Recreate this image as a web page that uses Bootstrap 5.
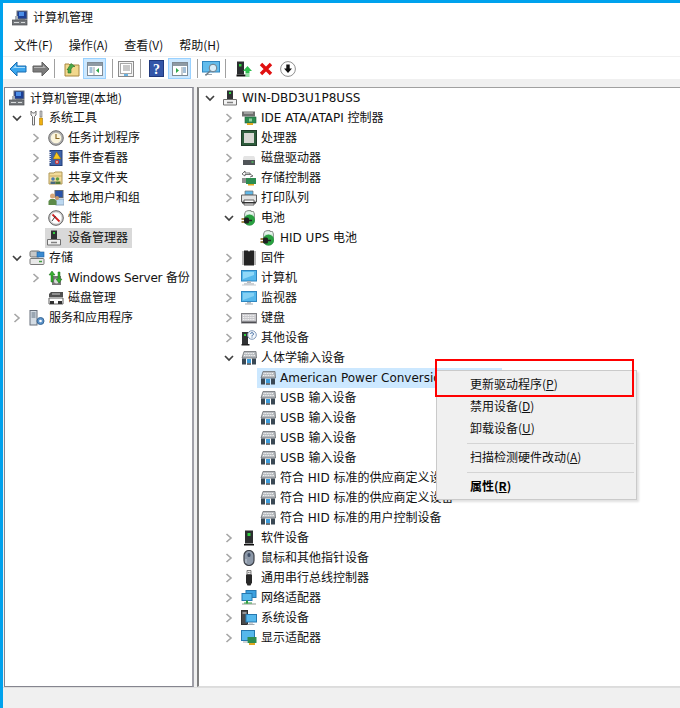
<!DOCTYPE html>
<html lang="zh-CN">
<head>
<meta charset="utf-8">
<title>计算机管理</title>
<link href="https://cdn.jsdelivr.net/npm/bootstrap@5.3.0/dist/css/bootstrap.min.css" rel="stylesheet">
<style>
html,body{margin:0;height:100%;overflow:hidden}
body{font:12px/20px "DejaVu Sans","Noto Sans CJK SC",sans-serif;color:#111;background:#fff}
.zh{font-family:"Noto Sans CJK SC","DejaVu Sans",sans-serif}
.mmc{width:680px;height:708px;border-top:3px solid #00a2ed;border-left:3px solid #00a2ed;background:#f0f0f0}
.mmc-title{height:30px;background:#fff;padding-left:9px;gap:5px}
.mmc-menu{height:24px;background:#fff;padding-left:11px;gap:16px;border-bottom:1px solid #f0f0f0}
.mmc-tools{height:22px;padding-top:1px;background:#fff;padding-left:3px}
.tb{width:23px;height:21px;flex:none}
.tb-on{background:#cce8ff;border:1px solid #99d1ff}
.tb-x{width:21px}
.tb-sep{width:1px;height:19px;background:#a0a0a0;flex:none}
.s1{margin:0 5px 0 2px}.s2{margin:0 1px 0 6px}.s3{margin:0 4px 0 3px}.s4{margin:0 6px 0 3px}
.mmc-main{height:600px;margin-top:8px;padding-left:1px;gap:3px}
.pane-l{width:190px;flex:none;background:#fff;border:1px solid #85858f;border-right-width:2px;border-right-color:#a0a0a8;padding-left:1px;overflow:hidden}
.pane-r{flex:1 1 0;min-width:0;background:#fff;border-left:2px solid #7f7f7f;border-top:1px solid #a0a0a0;border-bottom:1px solid #dcdcdc;overflow:hidden}
.rw{height:20px;white-space:nowrap}
.lv0{padding-left:3px}.lv1{padding-left:22px}.lv2{padding-left:41px}
.root-l{padding-left:3px}
.slot{width:16px;height:20px;flex:none;margin-right:4px}
.ico{width:16px;height:16px;flex:none;margin-right:4px}
.root-l .ico{margin-right:5px}
.pick{height:20px}
.pick-g{background:#d9d9d9;margin-left:-3px;padding:0 4px 0 1px}
.pick-g .ico{margin-right:6px}
.pick-b{background:#cce8ff;margin-left:-3px;padding:0 0 0 3px;width:245px}
.tight{letter-spacing:-.17px}
.mmc-status{height:22px;border-top:1px solid #dedede;background:#f0f0f0}
.ctx{display:block;left:433px;top:367px;width:201px;height:130px;padding:3px 2px;margin:0;background:#f0f0f0;border:1px solid #cacaca;border-radius:0;font-size:12px;min-width:0;box-shadow:2px 2px 2px rgba(0,0,0,.12)}
.ctx .dropdown-item{height:22px;padding:0 0 0 31px;line-height:20px;color:#111}
.ctx .dropdown-item.it-b{font-weight:700;color:#000}
.ctx .dropdown-divider{margin:3px 0 3px 28px;border-top:1px solid #d4d4d4;opacity:1}
.redbox{left:432px;top:356px;width:199px;height:38px;border:2px solid #ff0000;pointer-events:none;z-index:1001}
</style>
</head>
<body>
<svg width="0" height="0" class="position-absolute">
<defs>
<symbol id="c-r" viewBox="0 0 16 20"><path d="M5.5 6 10 10 5.5 14" fill="none" stroke="#a6a6a6" stroke-width="1.6"/></symbol>
<symbol id="c-d" viewBox="0 0 16 20"><path d="M4 8 8 12 12 8" fill="none" stroke="#404040" stroke-width="1.7"/></symbol>

<symbol id="i-mgmt" viewBox="0 0 16 16"><rect x="5" y="1" width="10" height="8" fill="#1c3f94" stroke="#6a7078"/><rect x="7" y="2" width="5" height="4" fill="#4c8fe8"/><path d="M7 9h6v1H7z" fill="#8a9098"/><path d="M3 6h3v4H3z" fill="#a8aeb4"/><rect x="0" y="10" width="15" height="5" fill="#74787c" stroke="#4a4c50" stroke-width=".7"/><path d="M2 12h5v1H2zM9 12h4v1H9z" fill="#d8dadc"/></symbol>
<symbol id="i-tools" viewBox="0 0 16 16"><path d="M2 1v4l1.500 1.500V15h2V6.500L7 5V1L5.500 3h-2z" fill="#f4f4f4" stroke="#707070"/><path d="M11 1h2v6h-2z" fill="#c8c8c8" stroke="#707070" stroke-width=".6"/><path d="M10.500 8h3v7h-3z" fill="#f0b010" stroke="#a87808" stroke-width=".6"/></symbol>
<symbol id="i-clock" viewBox="0 0 16 16"><circle cx="8" cy="8" r="7.300" fill="#b0b0b0" stroke="#6c6c6c"/><circle cx="8" cy="8" r="5.300" fill="#fbf5dc"/><path d="M8 4v4.500h3.500" fill="none" stroke="#8a6a28" stroke-width="1.200"/></symbol>
<symbol id="i-event" viewBox="0 0 16 16"><rect x="2" y="0.500" width="12" height="15" fill="#3f63a8" stroke="#24407c"/><path d="M2 2v12" stroke="#fff" stroke-width="1.500" stroke-dasharray="1 1"/><path d="M8.500 2 13 9H5z" fill="#f8c820" stroke="#806008" stroke-width=".5"/><circle cx="9" cy="12" r="2.200" fill="#c84040"/><path d="M8 12h2" stroke="#fff"/></symbol>
<symbol id="i-share" viewBox="0 0 16 16"><path d="M1 3h5l1-1h7v12H1z" fill="#f2dc9c" stroke="#b09858"/><path d="M2 6h12" stroke="#c8a860"/><circle cx="5" cy="9" r="1.800" fill="#4878b0"/><path d="M2.500 14v-2.500h5V14z" fill="#486880"/><circle cx="9.500" cy="9" r="1.800" fill="#60a040"/><path d="M7.500 14v-2.500h5V14z" fill="#507838"/></symbol>
<symbol id="i-users" viewBox="0 0 16 16"><rect x="7" y="0.500" width="8" height="7" fill="#2a54a8" stroke="#606870"/><rect x="8" y="9" width="8" height="6" fill="#bcd8f0" stroke="#90a8c0"/><circle cx="4.500" cy="6" r="2.500" fill="#d8a878"/><path d="M0.500 15v-4l2-2h4l2 2v4z" fill="#5c8a48"/><circle cx="9" cy="8" r="2" fill="#c89868"/></symbol>
<symbol id="i-perf" viewBox="0 0 16 16"><circle cx="8" cy="8" r="7.300" fill="#d0d0d0" stroke="#606060"/><circle cx="8" cy="8" r="5.500" fill="#fff"/><path d="M4.500 4.500 11.500 11.500" stroke="#d02020" stroke-width="1.800"/><path d="M4 11 7.500 6" stroke="#404040"/></symbol>
<symbol id="i-dev" viewBox="0 0 16 16"><rect x="5" y="0.500" width="6" height="9" fill="#303234"/><rect x="7" y="2" width="2" height="2" fill="#30d040"/><path d="M1.500 9.500h13v5.500h-13z" fill="#f2f2f2" stroke="#707070"/><path d="M5 12.500h6" stroke="#808080" stroke-width="1.500"/></symbol>
<symbol id="i-store" viewBox="0 0 16 16"><rect x="1" y="1" width="10" height="6" rx="1.500" fill="#c8c8c8" stroke="#707070"/><rect x="8" y="2" width="7" height="5" fill="#3a8ad0" stroke="#2060a0" stroke-width=".6"/><rect x="1" y="8.500" width="14" height="6" rx="1" fill="#e8e8e8" stroke="#787878"/><path d="M10 11.500h3" stroke="#40a040" stroke-width="1.500"/></symbol>
<symbol id="i-backup" viewBox="0 0 16 16"><rect x="4" y="6" width="9" height="9" fill="#787878"/><circle cx="8.500" cy="11" r="2.500" fill="#d8d8d8"/><path d="M4 1 1 5h2v7h2V5h2zM11 13l3-4h-2V2h-2v7H8z" fill="#38b030" stroke="#186818" stroke-width=".5"/></symbol>
<symbol id="i-disk" viewBox="0 0 16 16"><path d="M3 2h12v5H1V4z" fill="#505050"/><path d="M4 4h8" stroke="#d0d0d0"/><path d="M1 8h14v6H1z" fill="#fff" stroke="#606060"/><rect x="2" y="11" width="4" height="3" fill="#303030"/><rect x="10" y="11" width="4" height="3" fill="#303030"/></symbol>
<symbol id="i-svc" viewBox="0 0 16 16"><rect x="1" y="0.500" width="7" height="14.500" fill="#d4dce4" stroke="#68707c"/><path d="M2.500 3h4M2.500 5h4M2.500 7h4" stroke="#607080"/><circle cx="11.500" cy="11" r="3.500" fill="#5c92c8" stroke="#386898"/><circle cx="11.500" cy="11" r="1.300" fill="#fff"/></symbol>

<symbol id="i-ide" viewBox="0 0 16 16"><path d="M1 1.500h13v5H1z" fill="#707070"/><path d="M3 3h9" stroke="#d0d0d0"/><rect x="4" y="7" width="11" height="6" fill="#2c8c50" stroke="#1c6038" stroke-width=".6"/><rect x="8" y="8.500" width="3" height="3" fill="#90d0a0"/><path d="M6 13h6v2H6z" fill="#e0a820"/></symbol>
<symbol id="i-cpu" viewBox="0 0 16 16"><rect x="0.500" y="0.500" width="15" height="15" fill="#2e5c3c" stroke="#1e3c28"/><rect x="3" y="3" width="10" height="10" fill="#d8d8d4"/></symbol>
<symbol id="i-hdd" viewBox="0 0 16 16"><path d="M2 8 3 6h10l1 2v6H2z" fill="#e4e4e4"/><path d="M2 10h12v5H2z" fill="#505458"/><path d="M10.500 12h2" stroke="#50d060" stroke-width="1.300"/></symbol>
<symbol id="i-sctl" viewBox="0 0 16 16"><path d="M4 1 1 4l3 2V4.500h5V3H4zM9 7l3-1-3-2" fill="#fff" stroke="#505050" stroke-width=".8"/><path d="M1 8h8v5H1z" fill="#909090"/><rect x="5" y="8" width="10" height="6" fill="#2c8c50"/><path d="M7 14h6v1.500H7z" fill="#e0a820"/></symbol>
<symbol id="i-prn" viewBox="0 0 16 16"><path d="M4 1h8v4H4z" fill="#60b8e8" stroke="#707070" stroke-width=".7"/><path d="M0.500 5h15v7h-15z" fill="#e4e4e4" stroke="#606060"/><path d="M3 10h10v5H3z" fill="#fff" stroke="#606060"/><path d="M1 12h14v1.500H1z" fill="#303030"/></symbol>
<symbol id="i-bat" viewBox="0 0 16 16"><path d="M7 0.500h3v1h2.500l1 2.500v7a5 4 0 0 1-10 0V4l1-2.500z" fill="#d0e8d8" stroke="#707070" stroke-width=".7"/><circle cx="8.500" cy="10" r="5.500" fill="#28a040"/><path d="M5 3h7" stroke="#fff"/><path d="M0.500 9h3M0.500 12h3" stroke="#806010" stroke-width="1.500"/><rect x="3" y="7.500" width="5" height="6" rx="1.500" fill="#202020"/><path d="M8 10.500h3" stroke="#202020" stroke-width="1.500"/></symbol>
<symbol id="i-firm" viewBox="0 0 16 16"><path d="M1 2h14M1 4h14M1 6h14M1 8h14M1 10h14M1 12h14M1 14h14" stroke="#707070"/><path d="M3 0.500h4l1 1.500 1-1.500h4v15H3z" fill="#242424"/></symbol>
<symbol id="i-pc" viewBox="0 0 16 16"><rect x="0.500" y="0.500" width="15" height="10.500" fill="#55b8ec" stroke="#2e86c0"/><path d="M2 2h11v3L2 9z" fill="#90d8f8"/><path d="M6 11h4v2H6z" fill="#b0b8c0"/><path d="M3 13.500h10v1H3z" fill="#9aa0a8"/><path d="M1 15h14" stroke="#c8ccd0"/></symbol>
<symbol id="i-mon" viewBox="0 0 16 16"><rect x="0.500" y="1.500" width="15" height="10" fill="#55b8ec" stroke="#2e86c0"/><path d="M2 3h11v3L2 10z" fill="#84d0f4"/><path d="M6 12h4v1.500H6z" fill="#b0b8c0"/><path d="M4 14h8" stroke="#a0a8b0"/></symbol>
<symbol id="i-kbd" viewBox="0 0 16 16"><rect x="0.500" y="3.500" width="15" height="9.500" fill="#c8c8cc" stroke="#808084" /><path d="M2 5.500h12M2 7.500h12M2 9.500h12" stroke="#f4f4f4" stroke-dasharray="1 .7"/><path d="M1 11.500h14v1.500H1z" fill="#505054"/></symbol>
<symbol id="i-oth" viewBox="0 0 16 16"><rect x="1" y="2" width="6" height="12" fill="#303234"/><rect x="3" y="4" width="2" height="2" fill="#30d040"/><path d="M0.500 14h8v1.500h-8z" fill="#202020"/><circle cx="11" cy="5" r="4.300" fill="#f4f8fc" stroke="#8098b8"/><path d="M9.500 3.800a1.500 1.300 0 1 1 2 1.400l-.5.500v.8M11 7.500v.5" fill="none" stroke="#2e5c98" stroke-width=".9"/></symbol>
<symbol id="i-hid" viewBox="0 0 16 16"><path d="M3 1.500h12l.5 6.500H1z" fill="#b8bcc0" stroke="#6c7074" stroke-width=".8"/><path d="M3.500 3.500h10M3 5.500h11" stroke="#f4f4f4" stroke-dasharray="1 .7"/><path d="M1 8.500h4v6H1z" fill="#3a4854"/><path d="M6 9h4v4H6z" fill="#3a9ad8"/><path d="M11 8.500h4v6h-4z" fill="#3a4854"/><path d="M6 13h4v2H6z" fill="#707478"/></symbol>
<symbol id="i-soft" viewBox="0 0 16 16"><rect x="4" y="0.500" width="8" height="13" fill="#2c2e30"/><rect x="6.500" y="3" width="3" height="3" fill="#30d040"/><path d="M3 14h10v1.500H3z" fill="#101010"/></symbol>
<symbol id="i-mouse" viewBox="0 0 16 16"><rect x="3" y="0.500" width="10" height="15" rx="5" fill="#8c98a8" stroke="#3c4048" stroke-width="1.200"/><rect x="6.500" y="3" width="3" height="4" rx="1.500" fill="#405068"/><path d="M5 9v4" stroke="#c0c8d4"/></symbol>
<symbol id="i-usb" viewBox="0 0 16 16"><path d="M6 0.500h4v4H6z" fill="#e8e8e8" stroke="#606060" stroke-width=".8"/><path d="M7.500 2v1M9 2v1" stroke="#606060" stroke-width=".7"/><path d="M5 4.500h6v8l-1.500 3h-3L5 12.500z" fill="#282828"/></symbol>
<symbol id="i-net" viewBox="0 0 16 16"><rect x="5" y="0.500" width="10" height="7" fill="#3aa0e0" stroke="#2678b0"/><rect x="1" y="3.500" width="10" height="7" fill="#55b8ec" stroke="#2678b0"/><path d="M1 13h14v2H1z" fill="#c8ccc8"/><path d="M6 10.500v3" stroke="#30a040" stroke-width="2"/><path d="M3 12.500h8v1H3z" fill="#30a040"/></symbol>
<symbol id="i-sys" viewBox="0 0 16 16"><rect x="0.500" y="0.500" width="6" height="14" fill="#484a4c" stroke="#303030"/><path d="M1.500 3h4" stroke="#e0e0e0"/><rect x="5" y="4.500" width="10.500" height="7.500" fill="#55b8ec" stroke="#2678b0"/><path d="M8 12.500h4v1H8zM6.500 14h7v1h-7z" fill="#a0a8b0"/></symbol>
<symbol id="i-disp" viewBox="0 0 16 16"><rect x="0.500" y="0.500" width="13" height="10" fill="#55b8ec" stroke="#2678b0"/><rect x="6.500" y="7" width="9" height="6" fill="#2c8c50"/><path d="M8 13h6v2H8z" fill="#e0a820"/><path d="M2 12h4" stroke="#a0a8b0"/></symbol>

<symbol id="t-back" viewBox="0 0 18 16"><path d="M1 8 8 1v4h9v6H8v4z" fill="#3aa6ee" stroke="#1a6cb0"/><path d="M3 8l4-4v2h9v1H5z" fill="#a8dcfa"/></symbol>
<symbol id="t-fwd" viewBox="0 0 18 16"><path d="M17 8 10 1v4H1v6h9v4z" fill="#7c7c7c" stroke="#606060"/><path d="M2 6h9V4l3 3H2z" fill="#b4b4b4"/></symbol>
<symbol id="t-up" viewBox="0 0 16 16"><path d="M1 3h4l1 1h9v11H1z" fill="#f2d88c" stroke="#a88840"/><path d="M4 12V8l-1 1 4-6.500 4 3h-2L7 8v4z" fill="#48a848" stroke="#287028" stroke-width=".6"/></symbol>
<symbol id="t-left" viewBox="0 0 16 14"><rect x="0.500" y="0.500" width="15" height="13" fill="#fff" stroke="#7e8a94"/><path d="M1 1h14v3H1z" fill="#8e9aa4"/><path d="M2.500 6h3M2.500 8h3M2.500 10h3" stroke="#4a80b0"/><path d="M7 5v8" stroke="#8e9aa4"/><path d="M12 6v5L9 8.500z" fill="#2ea84a"/></symbol>
<symbol id="t-right" viewBox="0 0 16 14"><rect x="0.500" y="0.500" width="15" height="13" fill="#fff" stroke="#7e8a94"/><path d="M1 1h14v3H1z" fill="#8e9aa4"/><path d="M11 6h3M11 8h3M11 10h3" stroke="#4a80b0"/><path d="M10 5v8" stroke="#8e9aa4"/><path d="M4 6v5l3-2.500z" fill="#2ea84a"/></symbol>
<symbol id="t-prop" viewBox="0 0 16 16"><rect x="0.500" y="0.500" width="15" height="15" fill="#f4f4f4" stroke="#8a8a8a"/><rect x="2.500" y="2.500" width="11" height="10" fill="#fff" stroke="#a8a8a8"/><path d="M5 5h7M5 7h7M5 9h7" stroke="#909090"/><path d="M6 14h4" stroke="#3a9ad8" stroke-width="1.500"/></symbol>
<symbol id="t-mon" viewBox="0 0 18 16"><rect x="0.500" y="0.500" width="17" height="10.500" fill="#62bcec" stroke="#2e86c0"/><path d="M3 13.500h7" stroke="#9ca4ac"/><circle cx="11" cy="7" r="3.800" fill="#d8eefa" stroke="#6c7c88"/><path d="M8 10 3.500 14.500" stroke="#6c7c88" stroke-width="1.500"/></symbol>
<symbol id="t-drv" viewBox="0 0 16 16"><rect x="1" y="0.500" width="7" height="13" fill="#2c2e30"/><rect x="3" y="3" width="2.500" height="2.500" fill="#30d040"/><path d="M0.500 13.500h9v2h-9z" fill="#101010"/><path d="M11.500 5 16 10h-2.500v2h-4v-2H7z" fill="#30c050"/><path d="M9.500 13h4M9.500 15h4" stroke="#30c050" stroke-width="1.200"/></symbol>
<symbol id="t-x" viewBox="0 0 14 14"><path d="M2 2 12 12M12 2 2 12" stroke="#e01010" stroke-width="3.400"/></symbol>
<symbol id="t-dn" viewBox="0 0 16 16"><circle cx="8" cy="8" r="7.400" fill="#fff" stroke="#909090"/><path d="M6.300 3.500h3.400v4H12L8 12 4 7.500h2.300z" fill="#101010"/></symbol>
</defs>
</svg>

<div class="mmc position-relative">
  <div class="mmc-title d-flex align-items-center">
    <svg class="ico m-0"><use href="#i-mgmt"/></svg>
    <span>计算机管理</span>
  </div>
  <div class="mmc-menu zh d-flex align-items-center">
    <span>文件(F)</span><span>操作(A)</span><span>查看(V)</span><span>帮助(H)</span>
  </div>
  <div class="mmc-tools d-flex align-items-center">
    <span class="tb d-flex align-items-center justify-content-center"><svg width="18" height="16"><use href="#t-back"/></svg></span>
    <span class="tb d-flex align-items-center justify-content-center"><svg width="18" height="16"><use href="#t-fwd"/></svg></span>
    <span class="tb-sep s1"></span>
    <span class="tb d-flex align-items-center justify-content-center"><svg width="16" height="16"><use href="#t-up"/></svg></span>
    <span class="tb tb-on d-flex align-items-center justify-content-center"><svg width="16" height="14"><use href="#t-left"/></svg></span>
    <span class="tb-sep s2"></span>
    <span class="tb d-flex align-items-center justify-content-center"><svg width="16" height="16"><use href="#t-prop"/></svg></span>
    <span class="tb-sep s3"></span>
    <span class="tb d-flex align-items-center justify-content-center"><svg width="15" height="17"><rect x=".5" y=".5" width="14" height="16" fill="#3456a8" stroke="#20387c"/><text x="7.500" y="14" text-anchor="middle" font-size="14" font-weight="700" fill="#fff" font-family="Liberation Serif">?</text></svg></span>
    <span class="tb tb-on d-flex align-items-center justify-content-center"><svg width="16" height="14"><use href="#t-right"/></svg></span>
    <span class="tb-sep s2"></span>
    <span class="tb d-flex align-items-center justify-content-center"><svg width="18" height="16"><use href="#t-mon"/></svg></span>
    <span class="tb-sep s4"></span>
    <span class="tb d-flex align-items-center justify-content-center"><svg width="16" height="16"><use href="#t-drv"/></svg></span>
    <span class="tb tb-x d-flex align-items-center justify-content-center"><svg width="14" height="14"><use href="#t-x"/></svg></span>
    <span class="tb d-flex align-items-center justify-content-center"><svg width="16" height="16"><use href="#t-dn"/></svg></span>
  </div>

  <div class="mmc-main d-flex">
    <div class="pane-l">
      <div class="rw root-l d-flex align-items-center"><svg class="ico"><use href="#i-mgmt"/></svg><span class="zh">计算机管理(本地)</span></div>
      <div class="rw lv0 d-flex align-items-center"><svg class="slot"><use href="#c-d"/></svg><svg class="ico"><use href="#i-tools"/></svg><span>系统工具</span></div>
      <div class="rw lv1 d-flex align-items-center"><svg class="slot"><use href="#c-r"/></svg><svg class="ico"><use href="#i-clock"/></svg><span>任务计划程序</span></div>
      <div class="rw lv1 d-flex align-items-center"><svg class="slot"><use href="#c-r"/></svg><svg class="ico"><use href="#i-event"/></svg><span>事件查看器</span></div>
      <div class="rw lv1 d-flex align-items-center"><svg class="slot"><use href="#c-r"/></svg><svg class="ico"><use href="#i-share"/></svg><span>共享文件夹</span></div>
      <div class="rw lv1 d-flex align-items-center"><svg class="slot"><use href="#c-r"/></svg><svg class="ico"><use href="#i-users"/></svg><span>本地用户和组</span></div>
      <div class="rw lv1 d-flex align-items-center"><svg class="slot"><use href="#c-r"/></svg><svg class="ico"><use href="#i-perf"/></svg><span>性能</span></div>
      <div class="rw lv1 d-flex align-items-center"><span class="slot"></span><span class="pick pick-g d-flex align-items-center"><svg class="ico"><use href="#i-dev"/></svg><span>设备管理器</span></span></div>
      <div class="rw lv0 d-flex align-items-center"><svg class="slot"><use href="#c-d"/></svg><svg class="ico"><use href="#i-store"/></svg><span>存储</span></div>
      <div class="rw lv1 d-flex align-items-center"><svg class="slot"><use href="#c-r"/></svg><svg class="ico"><use href="#i-backup"/></svg><span class="tight">Windows Server 备份</span></div>
      <div class="rw lv1 d-flex align-items-center"><span class="slot"></span><svg class="ico"><use href="#i-disk"/></svg><span>磁盘管理</span></div>
      <div class="rw lv0 d-flex align-items-center"><svg class="slot"><use href="#c-r"/></svg><svg class="ico"><use href="#i-svc"/></svg><span>服务和应用程序</span></div>
    </div>
    <div class="pane-r">
      <div class="rw lv0 d-flex align-items-center"><svg class="slot"><use href="#c-d"/></svg><svg class="ico"><use href="#i-dev"/></svg><span>WIN-DBD3U1P8USS</span></div>
      <div class="rw lv1 d-flex align-items-center"><svg class="slot"><use href="#c-r"/></svg><svg class="ico"><use href="#i-ide"/></svg><span>IDE ATA/ATAPI 控制器</span></div>
      <div class="rw lv1 d-flex align-items-center"><svg class="slot"><use href="#c-r"/></svg><svg class="ico"><use href="#i-cpu"/></svg><span>处理器</span></div>
      <div class="rw lv1 d-flex align-items-center"><svg class="slot"><use href="#c-r"/></svg><svg class="ico"><use href="#i-hdd"/></svg><span>磁盘驱动器</span></div>
      <div class="rw lv1 d-flex align-items-center"><svg class="slot"><use href="#c-r"/></svg><svg class="ico"><use href="#i-sctl"/></svg><span>存储控制器</span></div>
      <div class="rw lv1 d-flex align-items-center"><svg class="slot"><use href="#c-r"/></svg><svg class="ico"><use href="#i-prn"/></svg><span>打印队列</span></div>
      <div class="rw lv1 d-flex align-items-center"><svg class="slot"><use href="#c-d"/></svg><svg class="ico"><use href="#i-bat"/></svg><span>电池</span></div>
      <div class="rw lv2 d-flex align-items-center"><span class="slot"></span><svg class="ico"><use href="#i-bat"/></svg><span>HID UPS 电池</span></div>
      <div class="rw lv1 d-flex align-items-center"><svg class="slot"><use href="#c-r"/></svg><svg class="ico"><use href="#i-firm"/></svg><span>固件</span></div>
      <div class="rw lv1 d-flex align-items-center"><svg class="slot"><use href="#c-r"/></svg><svg class="ico"><use href="#i-pc"/></svg><span>计算机</span></div>
      <div class="rw lv1 d-flex align-items-center"><svg class="slot"><use href="#c-r"/></svg><svg class="ico"><use href="#i-mon"/></svg><span>监视器</span></div>
      <div class="rw lv1 d-flex align-items-center"><svg class="slot"><use href="#c-r"/></svg><svg class="ico"><use href="#i-kbd"/></svg><span>键盘</span></div>
      <div class="rw lv1 d-flex align-items-center"><svg class="slot"><use href="#c-r"/></svg><svg class="ico"><use href="#i-oth"/></svg><span>其他设备</span></div>
      <div class="rw lv1 d-flex align-items-center"><svg class="slot"><use href="#c-d"/></svg><svg class="ico"><use href="#i-hid"/></svg><span>人体学输入设备</span></div>
      <div class="rw lv2 d-flex align-items-center"><span class="slot"></span><span class="pick pick-b d-flex align-items-center"><svg class="ico"><use href="#i-hid"/></svg><span>American Power Conversion USB UPS</span></span></div>
      <div class="rw lv2 d-flex align-items-center"><span class="slot"></span><svg class="ico"><use href="#i-hid"/></svg><span>USB 输入设备</span></div>
      <div class="rw lv2 d-flex align-items-center"><span class="slot"></span><svg class="ico"><use href="#i-hid"/></svg><span>USB 输入设备</span></div>
      <div class="rw lv2 d-flex align-items-center"><span class="slot"></span><svg class="ico"><use href="#i-hid"/></svg><span>USB 输入设备</span></div>
      <div class="rw lv2 d-flex align-items-center"><span class="slot"></span><svg class="ico"><use href="#i-hid"/></svg><span>USB 输入设备</span></div>
      <div class="rw lv2 d-flex align-items-center"><span class="slot"></span><svg class="ico"><use href="#i-hid"/></svg><span>符合 HID 标准的供应商定义设备</span></div>
      <div class="rw lv2 d-flex align-items-center"><span class="slot"></span><svg class="ico"><use href="#i-hid"/></svg><span>符合 HID 标准的供应商定义设备</span></div>
      <div class="rw lv2 d-flex align-items-center"><span class="slot"></span><svg class="ico"><use href="#i-hid"/></svg><span>符合 HID 标准的用户控制设备</span></div>
      <div class="rw lv1 d-flex align-items-center"><svg class="slot"><use href="#c-r"/></svg><svg class="ico"><use href="#i-soft"/></svg><span>软件设备</span></div>
      <div class="rw lv1 d-flex align-items-center"><svg class="slot"><use href="#c-r"/></svg><svg class="ico"><use href="#i-mouse"/></svg><span>鼠标和其他指针设备</span></div>
      <div class="rw lv1 d-flex align-items-center"><svg class="slot"><use href="#c-r"/></svg><svg class="ico"><use href="#i-usb"/></svg><span>通用串行总线控制器</span></div>
      <div class="rw lv1 d-flex align-items-center"><svg class="slot"><use href="#c-r"/></svg><svg class="ico"><use href="#i-net"/></svg><span>网络适配器</span></div>
      <div class="rw lv1 d-flex align-items-center"><svg class="slot"><use href="#c-r"/></svg><svg class="ico"><use href="#i-sys"/></svg><span>系统设备</span></div>
      <div class="rw lv1 d-flex align-items-center"><svg class="slot"><use href="#c-r"/></svg><svg class="ico"><use href="#i-disp"/></svg><span>显示适配器</span></div>
    </div>
  </div>
  <div class="mmc-status"></div>

  <div class="dropdown-menu zh ctx position-absolute">
    <span class="dropdown-item">更新驱动程序(<u>P</u>)</span>
    <span class="dropdown-item">禁用设备(<u>D</u>)</span>
    <span class="dropdown-item">卸载设备(<u>U</u>)</span>
    <hr class="dropdown-divider">
    <span class="dropdown-item">扫描检测硬件改动(<u>A</u>)</span>
    <hr class="dropdown-divider">
    <span class="dropdown-item it-b">属性(<u>R</u>)</span>
  </div>
  <div class="redbox position-absolute"></div>
</div>
</body>
</html>
